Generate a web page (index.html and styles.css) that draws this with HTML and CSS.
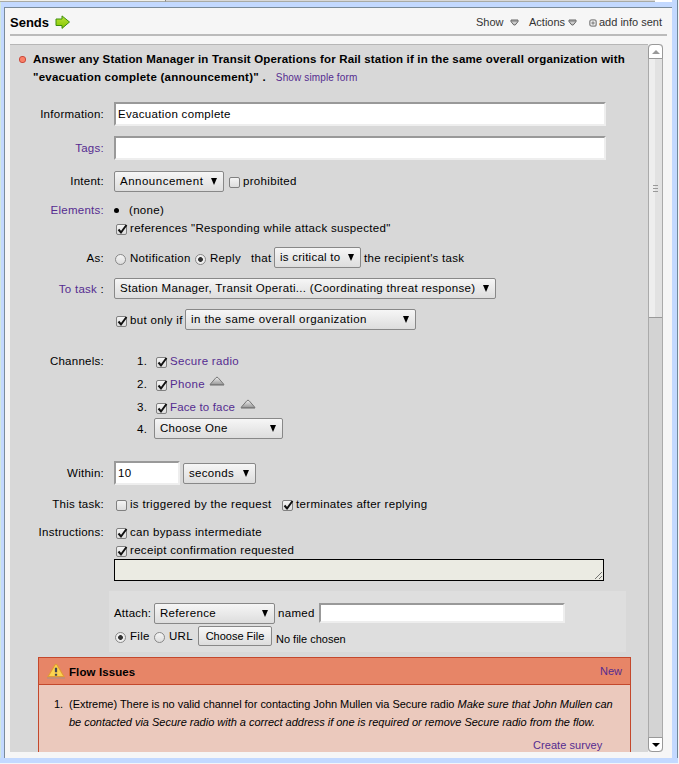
FILE: index.html
```html
<!DOCTYPE html>
<html lang="en">
<head>
<meta charset="utf-8">
<title>Sends</title>
<link rel="stylesheet" href="styles.css">
</head>
<body>
<svg class="defs" width="0" height="0">
  <defs>
    <linearGradient id="up" x1="0" y1="0" x2="0" y2="1"><stop offset="0" stop-color="#eee"/><stop offset="1" stop-color="#999"/></linearGradient>
    <linearGradient id="go" x1="0" y1="0" x2="0" y2="1"><stop offset="0" stop-color="#b9e53a"/><stop offset="1" stop-color="#86c400"/></linearGradient>
    <symbol id="tick" viewBox="0 0 14 13"><path d="M3.5 6.5 6 9.5 11.5 2" fill="none" stroke="#111" stroke-width="2"/></symbol>
    <symbol id="raise" viewBox="0 0 16 11"><path d="M1 8.5 7 1.6Q8 .8 9 1.6L15 8.5Z" fill="url(#up)" stroke="#777"/><path d="M1 9.2H15" stroke="#888"/></symbol>
    <symbol id="drop" viewBox="0 0 9 7"><path d="M1 1H8V2.6L5.2 6H3.8L1 2.6Z" fill="#ccc" stroke="#666"/><path d="M1 2H8" stroke="#777"/></symbol>
  </defs>
</svg>
<div class="strip"><div class="strip-a"></div><div class="strip-b"></div><div class="strip-c"></div></div>
<div class="frame">
<div class="window">
  <header class="head">
    <h1>Sends</h1>
    <svg class="go" width="16" height="15" viewBox="0 0 16 15"><path d="M1 4H7V.9L14.5 7 7 13.4V10.5H1Z" fill="url(#go)" stroke="#3f8f0c" stroke-linejoin="round"/></svg>
    <span class="menu m1">Show</span><svg class="drop d1" width="9" height="7"><use href="#drop"/></svg>
    <span class="menu m2">Actions</span><svg class="drop d2" width="9" height="7"><use href="#drop"/></svg>
    <svg class="plus" width="8" height="8" viewBox="0 0 8 8"><rect x=".8" y=".8" width="6.4" height="6.4" rx="2" fill="#eee" stroke="#888" stroke-width="1.3"/><path d="M4 2.3V5.7M2.3 4H5.7" stroke="#777"/></svg>
    <span class="menu m3">add info sent</span>
  </header>
  <div class="body">
    <main class="form">
      <section class="title">
        <i class="dot"></i>
        <div><b class="t1">Answer any Station Manager in Transit Operations for Rail station if in the same overall organization with</b><br><b class="t2">"evacuation complete (announcement)" .</b><a class="simple">Show simple form</a></div>
      </section>
      <div class="row r-info"><label>Information:</label><div class="field wide">Evacuation complete</div></div>
      <div class="row r-tags"><label class="link">Tags:</label><div class="field wide"></div></div>
      <div class="row r-intent"><label>Intent:</label><div class="select s-intent">Announcement</div><i class="box"></i><span>prohibited</span></div>
      <div class="row r-elem"><label class="link">Elements:</label><i class="bullet"></i><span>(none)</span></div>
      <div class="row r-ref"><label></label><i class="box"><svg><use href="#tick"/></svg></i><span>references "Responding while attack suspected"</span></div>
      <div class="row r-as"><label>As:</label><i class="radio"></i><span class="notif">Notification</span><i class="radio on"></i><span class="reply">Reply</span><span class="that">that</span><div class="select s-crit">is critical to</div><span class="recip">the recipient's task</span></div>
      <div class="row r-task"><label><a>To task</a> :</label><div class="select s-task">Station Manager, Transit Operati... (Coordinating threat response)</div></div>
      <div class="row r-only"><label></label><i class="box"><svg><use href="#tick"/></svg></i><span class="only">but only if</span><div class="select s-org">in the same overall organization</div></div>
      <div class="row r-ch1"><label>Channels:</label><span class="num">1.</span><i class="box"><svg><use href="#tick"/></svg></i><a>Secure radio</a></div>
      <div class="row r-ch"><label></label><span class="num">2.</span><i class="box"><svg><use href="#tick"/></svg></i><a>Phone</a><svg class="raise"><use href="#raise"/></svg></div>
      <div class="row r-ch"><label></label><span class="num">3.</span><i class="box"><svg><use href="#tick"/></svg></i><a class="face">Face to face</a><svg class="raise"><use href="#raise"/></svg></div>
      <div class="row r-ch4"><label></label><span class="num">4.</span><div class="select s-choose">Choose One</div></div>
      <div class="row r-within"><label>Within:</label><div class="field ten">10</div><div class="select s-sec">seconds</div></div>
      <div class="row r-this"><label>This task:</label><i class="box"></i><span class="trig">is triggered by the request</span><i class="box"><svg><use href="#tick"/></svg></i><span>terminates after replying</span></div>
      <div class="row r-inst"><label>Instructions:</label><i class="box"><svg><use href="#tick"/></svg></i><span>can bypass intermediate</span></div>
      <div class="row r-rec"><label></label><i class="box"><svg><use href="#tick"/></svg></i><span>receipt confirmation requested</span></div>
      <div class="area"><svg width="9" height="9" viewBox="0 0 9 9"><path d="M1 8 8 1M5 8 8 5" stroke="#555" stroke-width=".8"/></svg></div>
      <section class="attach">
        <div class="line a1"><span class="att">Attach:</span><div class="select s-ref">Reference</div><span class="named">named</span><div class="field nm"></div></div>
        <div class="line a2"><i class="radio on"></i><span class="file">File</span><i class="radio"></i><span class="url">URL</span><div class="button">Choose File</div><span class="nofile">No file chosen</span></div>
      </section>
      <section class="issues">
        <div class="ihead"><svg width="18" height="16" viewBox="1 0 16 15.5" preserveAspectRatio="none"><path d="M8 2Q9 .5 10 2L16.2 13.2H1.8Z" fill="#fcd34f" stroke="#e29a35" stroke-linejoin="round"/><path d="M1 14.5H17" stroke="#a99183"/><path d="M9 4.5V9M9 10.3V12.3" stroke="#445" stroke-width="2"/></svg><b>Flow Issues</b><a>New</a></div>
        <div class="item"><span class="n">1.</span><div><span class="i1">(Extreme) There is no valid channel for contacting John Mullen via Secure radio</span> <em class="i2">Make sure that John Mullen can</em><br><em class="i3">be contacted via Secure radio with a correct address if one is required or remove Secure radio from the flow.</em></div></div>
        <a class="survey">Create survey</a>
      </section>
    </main>
    <div class="scroll"><div class="sb up"><i></i></div><div class="thumb"><i></i><i></i><i></i></div><div class="track"></div><div class="sb down"><i></i></div></div>
  </div>
</div>
</div>
<div class="base"></div>
</body>
</html>
```
FILE: styles.css
```css
* { box-sizing: border-box; }
body { margin: 0; width: 679px; height: 764px; overflow: hidden; background: #f3f5f8; color: #000; font: 11.5px "Liberation Sans", Arial, sans-serif; white-space: nowrap; }
.defs { position: absolute; }
.strip { display: flex; height: 2px; width: 678px; background: #c3d9ff; border-right: 1px solid #6f8797; }
.strip-a { width: 166px; background: #f0f0ea; border-right: 1px solid #888; border-bottom: 1px solid #a8aaa4; }
.strip-b { width: 489px; background: #d8d8d8; border-bottom: 1px solid #a8aaa4; }
.strip-c { width: 17px; background: #fff; }
.frame { width: 678px; height: 756px; padding: 5px 0 0 4px; background: #c3d9ff; border-left: 1px solid #d2e7dc; border-right: 1px solid #6f8797; }
.base { width: 678px; height: 5px; background: #c3d9ff; }
.window { width: 668px; height: 751px; margin-left: -1px; border-top: 1px solid #7a8b9a; border-left: 1px solid #7a8b9a; background: #f6f6f6; padding: 0 0 0 5px; }
.head { display: flex; height: 28px; width: 657px; border-bottom: 2px solid #bbb; align-items: flex-start; color: #333; }
h1 { margin: 7px 0 0; width: 45px; font-size: 13px; line-height: 16px; color: #000; }
.go { margin-top: 7px; width: 16px; }
.menu { margin-top: 7px; font-size: 11px; line-height: 14px; }
.m1 { margin-left: 405px; width: 34px; }
.d1 { margin: 11px 10px 0 0; }
.m2 { width: 39px; }
.d2 { margin: 11px 12px 0 0; }
.plus { margin: 11px 2px 0 0; }
.body { display: flex; height: 708px; margin-top: 8px; width: 653px; }
.form { width: 638px; height: 708px; overflow: hidden; background: #d8d8d8; border-top: 1px solid #b6b6b6; }
a, .link { color: #552c90; }
.title { display: flex; height: 57px; padding: 5px 0 0 9px; line-height: 18px; font-size: 11.5px; color: #000; }
.t1 { letter-spacing: .17px; }
.t2 { letter-spacing: .24px; }
.dot { width: 7px; height: 7px; margin: 6px 7px 0 0; border-radius: 3px; border: 1px solid #c94a3c; background: #fa8068; }
.simple { margin-left: 10px; font-size: 10px; letter-spacing: .13px; }
.row, .line { letter-spacing: .32px; }
.row { display: flex; align-items: center; }
.row label { width: 94px; margin-right: 10px; text-align: right; flex: none; letter-spacing: .26px; }
.field { height: 24px; background: #fff; border: 2px solid; border-color: #999 #eee #eee #999; padding-left: 2px; line-height: 20px; color: #000; }
.wide { width: 492px; }
.select { position: relative; flex: none; height: 21px; border: 1px solid #888; border-radius: 2px; background: linear-gradient(#f6f6f6, #ddd); padding-left: 5px; line-height: 19px; color: #000; }
.select::after { content: ""; position: absolute; right: 6px; top: 6px; border: 3.5px solid transparent; border-top: 7px solid #000; border-bottom: 0; }
.box { flex: none; width: 11px; height: 11px; margin: 3px 3px 0 2px; border: 1px solid #808080; border-radius: 2px; background: linear-gradient(#f4f4f4, #ddd); }
.box svg { display: block; width: 14px; height: 13px; margin: -2px 0 0 -2px; }
.radio { flex: none; width: 11px; height: 11px; margin: 3px 4px 0 1px; border: 1px solid #888; border-radius: 50%; background: linear-gradient(#f4f4f4, #ddd); }
.radio.on { background: radial-gradient(circle, #333 0 2px, #eee 2.8px); }
.r-info { height: 24px; }
.r-tags { height: 24px; margin-top: 10px; }
.r-intent { height: 22px; margin-top: 10px; }
.s-intent { width: 110px; margin-right: 3px; letter-spacing: .5px; }
.r-elem { height: 18px; margin-top: 9px; }
.bullet { width: 5px; height: 5px; border-radius: 50%; background: #000; margin-right: 10px; }
.r-ref { height: 18px; }
.r-as { height: 21px; margin-top: 10px; }
.notif { width: 64px; } .reply { width: 41px; } .that { width: 23px; } .recip { letter-spacing: .27px; }
.s-crit { width: 87px; margin-right: 3px; letter-spacing: .25px; }
.r-task { height: 21px; margin-top: 10px; }
.s-task { width: 382px; }
.r-only { height: 21px; margin-top: 10px; }
.only { width: 55px; } .s-org { width: 231px; letter-spacing: .42px; }
.r-ch1 { height: 23px; margin-top: 19px; }
.r-ch { height: 23px; }
.num { width: 40px; padding-left: 23px; }
.raise { width: 16px; height: 11px; margin: -5px 0 0 4px; }
.face { letter-spacing: .15px; width: 66px; }
.r-ch4 { height: 21px; }
.s-choose { width: 129px; }
.r-within { height: 24px; margin-top: 22px; }
.ten { width: 66px; margin-right: 3px; }
.s-sec { width: 73px; }
.r-this { height: 18px; margin-top: 10px; }
.trig { width: 150px; }
.r-inst { height: 18px; margin-top: 10px; }
.r-rec { height: 18px; }
.area { width: 490px; height: 22px; margin-left: 104px; border: 1px solid #000; background: #ebebe3; display: flex; justify-content: flex-end; align-items: flex-end; }
.attach { width: 517px; height: 61px; margin: 10px 0 0 99px; background: #dedede; padding: 11px 0 0 5px; }
.line { display: flex; align-items: center; height: 22px; }
.att { width: 40px; letter-spacing: .2px; } .s-ref { width: 121px; margin-right: 3px; } .named { width: 41px; }
.nm { width: 246px; height: 20px; }
.a2 { height: 24px; } .file { width: 23px; } .url { width: 29px; }
.button { width: 74px; height: 20px; border: 1px solid #888; border-radius: 2px; background: linear-gradient(#f8f8f8, #ddd); text-align: center; line-height: 18px; font-size: 11px; letter-spacing: 0; margin: -1px 4px 0 0; }
.nofile { font-size: 11px; letter-spacing: 0; padding-top: 5px; }
.issues { width: 593px; height: 120px; margin: 5px 0 0 28px; border: 1px solid #c4482c; background: #ebc9bd; color: #000; font-size: 11px; }
.ihead { display: flex; align-items: center; height: 27px; background: #e78567; border-bottom: 1px solid #c4482c; padding: 0 8px; }
.ihead b { margin: 2px 0 0 4px; flex: 1; font-size: 11.5px; letter-spacing: .1px; }
.item { display: flex; padding: 10px 0 0 15px; line-height: 18px; }
.n { width: 15px; }
.i1, .i2 { letter-spacing: -.025px; }
.i3 { letter-spacing: -.01px; }
.survey { display: block; margin: 5px 0 0 494px; line-height: 18px; font-size: 11px; letter-spacing: .06px; }
.scroll { width: 15px; background: #d3d3d3; border: 1px solid #aaa; border-width: 0 1px; display: flex; flex-direction: column; border-radius: 4px; }
.sb { height: 15px; margin: 0 -1px; border: 1px solid #999; background: #fff; display: flex; justify-content: center; align-items: center; }
.up { border-radius: 4px 4px 0 0; } .down { border-radius: 0 0 4px 4px; height: 15px; }
.up i { border: 4px solid transparent; border-bottom-color: #999; border-top: 0; }
.down i { border: 4px solid transparent; border-top-color: #000; border-bottom: 0; }
.thumb { height: 259px; background: linear-gradient(90deg, #eee 50%, #e2e2e2 50%); border-bottom: 1px solid #999; display: flex; flex-direction: column; align-items: center; justify-content: center; gap: 2px; }
.thumb i { width: 5px; height: 1px; background: #999; }
.track { flex: 1; }
```
